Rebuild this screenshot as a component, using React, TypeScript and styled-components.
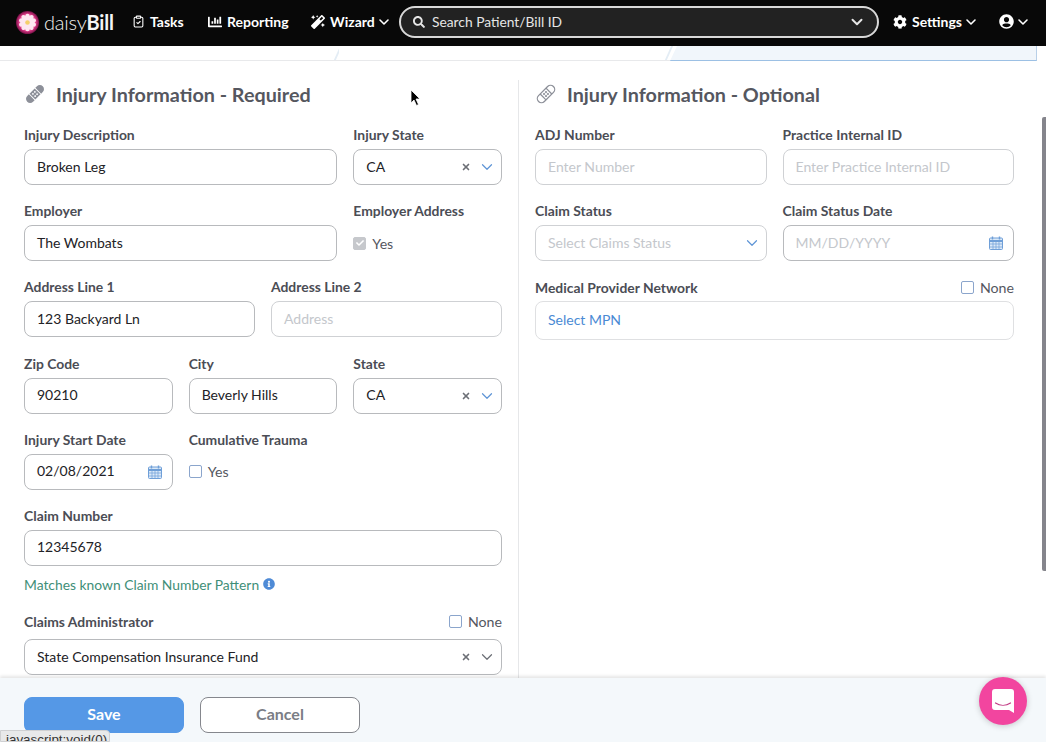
import styled, { createGlobalStyle } from "styled-components";
import {
  FaChartBar,
  FaCheck,
  FaCog,
  FaInfoCircle,
  FaMagic,
  FaSearch,
  FaUserCircle,
} from "react-icons/fa";
import { ChevronDown, ClipboardCheck, X } from "lucide-react";

const GlobalStyle = createGlobalStyle`
  html, body {
    margin: 0;
    height: 100%;
    overflow: hidden;
    background: #fff;
    font-family: Lato, "Liberation Sans", sans-serif;
  }
  * { box-sizing: border-box; }
`;

const Page = styled.div`
  position: relative;
  display: flex;
  flex-direction: column;
  height: 742px;
  overflow: hidden;
`;

const Header = styled.header`
  display: flex;
  align-items: center;
  flex: 0 0 46px;
  padding: 0 0 2px 16px;
  background: #080808;
  color: #fff;
`;

const Logo = styled.div`
  display: flex;
  align-items: center;
  gap: 5px;
  width: 116px;
  font-size: 20px;
  letter-spacing: -0.2px;
  color: #f2f2f2;
  font-weight: 300;
  b {
    font-weight: 700;
    color: #f4f4f4;
  }
`;

const NavItem = styled.div<{ $width: number }>`
  display: flex;
  align-items: center;
  gap: 5px;
  width: ${(p) => p.$width}px;
  padding-bottom: 1px;
  font-size: 14px;
  font-weight: 700;
  white-space: nowrap;
`;

const NavChevron = styled(ChevronDown).attrs({ size: 16, strokeWidth: 2.4 })`
  margin-left: -4px;
  flex: none;
`;

const SearchBar = styled.div`
  display: flex;
  align-items: center;
  gap: 7px;
  width: 480px;
  height: 32px;
  margin-right: 14px;
  padding: 0 12px 1px;
  background: #222;
  border: 2px solid #d8d8d8;
  border-radius: 16px;
  font-size: 13.8px;
  color: #e6e6e6;
  span {
    flex: 1;
  }
`;

const SearchChevron = styled(ChevronDown).attrs({ size: 18, strokeWidth: 2.6 })`
  margin-right: -1px;
`;

const TabStrip = styled.div`
  display: flex;
  flex: 0 0 15px;
`;

const Tab = styled.div<{ $width: number }>`
  position: relative;
  width: ${(p) => p.$width}px;
  background: #fff;
  border-bottom: 1px solid #e8e9eb;
  &::after {
    content: "";
    position: absolute;
    top: 0;
    bottom: 0;
    right: 0;
    width: 2px;
    background: #e4edf5;
    transform: skewX(-24deg);
  }
`;

const ActiveTab = styled.div`
  flex: 0 0 367px;
  background: #f1f6fb;
  border-bottom: 1px solid #9cc0e4;
  border-right: 1px solid #b9d0e8;
  clip-path: polygon(7px 0, 100% 0, 100% 100%, 0 100%);
`;

const Content = styled.main`
  display: flex;
  flex: 1;
  min-height: 0;
  padding-top: 19px;
  overflow: hidden;
`;

const LeftColumn = styled.section`
  width: 519px;
  padding: 1px 16px 0 24px;
  border-right: 1px solid #e6e7e9;
`;

const RightColumn = styled.section`
  flex: 1;
  padding: 1px 32px 0 16px;
`;

const Heading = styled.h2`
  display: flex;
  align-items: center;
  gap: 10px;
  height: 26px;
  margin: 0 0 19px;
  font-size: 19.75px;
  font-weight: 700;
  color: #55575f;
  svg {
    width: 22px;
    height: 22px;
    color: #8d9099;
  }
`;

const FormGrid = styled.div`
  display: grid;
  grid-template-columns: repeat(12, 1fr);
  column-gap: 16px;
  row-gap: 17.2px;
`;

const Field = styled.div<{ $span: number }>`
  grid-column: span ${(p) => p.$span};
  min-width: 0;
`;

const Label = styled.label`
  display: block;
  height: 18px;
  margin-bottom: 5px;
  font-size: 13.9px;
  line-height: 18px;
  font-weight: 700;
  color: #4b4d55;
`;

const LabelRow = styled.div<{ $gap: number }>`
  display: flex;
  justify-content: space-between;
  align-items: center;
  height: 18px;
  margin-bottom: ${(p) => p.$gap}px;
  font-size: 13.9px;
  font-weight: 700;
  color: #4b4d55;
`;

const TextBox = styled.div<{ $muted?: boolean; $light?: boolean }>`
  display: flex;
  align-items: center;
  gap: 7px;
  height: 36px;
  padding: 0 12px 2px;
  background: #fff;
  border: 1px solid ${(p) => (p.$light ? "#cfd1d4" : "#b8babd")};
  border-radius: 8px;
  font-size: 14px;
  color: ${(p) => (p.$muted ? "#c4c7cc" : "#222226")};
  span {
    flex: 1;
    white-space: nowrap;
  }
`;

const MpnBox = styled(TextBox)`
  height: 39px;
  border-color: #dfe0e2;
  color: #4a8ad4;
`;

const ClearIcon = styled(X).attrs({ size: 10, strokeWidth: 4 })`
  flex: none;
  margin-top: 2px;
  color: #6c6f76;
`;

const Chevron = styled(ChevronDown).attrs({ size: 18, strokeWidth: 1.6 })<{ $blue?: boolean }>`
  flex: none;
  margin: 2px -7px 0 0;
  color: ${(p) => (p.$blue ? "#5f95d6" : "#6c6f76")};
`;

const CalendarSlot = styled.div`
  display: flex;
  margin: 2px -2px 0 0;
`;

const CheckRow = styled.div`
  display: flex;
  align-items: center;
  gap: 6px;
  height: 36px;
  font-size: 14.2px;
  font-weight: 400;
  color: #55575f;
`;

const InlineCheck = styled(CheckRow)`
  height: 18px;
`;

const CheckBox = styled.div<{ $disabled?: boolean }>`
  display: flex;
  align-items: center;
  justify-content: center;
  width: 13px;
  height: 13px;
  background: ${(p) => (p.$disabled ? "#c6c8cc" : "#fff")};
  border: 1px solid ${(p) => (p.$disabled ? "#c6c8cc" : "#8ba5cc")};
  border-radius: 2px;
  color: #fff;
  svg {
    width: 8px;
    height: 8px;
  }
`;

const HintRow = styled.div`
  grid-column: span 12;
  display: flex;
  align-items: center;
  gap: 4px;
  height: 18px;
  margin-top: -8px;
  margin-bottom: 2px;
  font-size: 13.85px;
  color: #3f8f78;
  svg {
    width: 12px;
    height: 12px;
    color: #4f8bd6;
  }
`;

const Footer = styled.footer`
  display: flex;
  align-items: flex-start;
  gap: 16px;
  flex: 0 0 64px;
  padding: 19px 24px 0;
  background: #f4f8fb;
  box-shadow: 0 -2px 3px rgba(0, 0, 0, 0.1);
  z-index: 1;
`;

const Button = styled.button<{ $primary?: boolean }>`
  width: 160px;
  height: 36px;
  padding: 0 0 3px;
  border-radius: 8px;
  border: 1px solid ${(p) => (p.$primary ? "#5598e6" : "#85878d")};
  background: ${(p) => (p.$primary ? "#5598e6" : "#fff")};
  color: ${(p) => (p.$primary ? "#fff" : "#7a7d85")};
  font-family: inherit;
  font-size: 16px;
  font-weight: 700;
`;

const StatusTip = styled.div`
  position: absolute;
  left: 0;
  bottom: 0;
  z-index: 3;
  height: 12px;
  width: 110px;
  padding: 1px 0 0 5px;
  overflow: hidden;
  background: #e8e9ea;
  border: 1px solid #cfd0d2;
  border-radius: 0 4px 0 0;
  font-family: "Liberation Sans", sans-serif;
  font-size: 13.4px;
  line-height: 15px;
  white-space: nowrap;
  color: #333;
`;

const ChatBubble = styled.div`
  position: absolute;
  left: 979px;
  top: 677px;
  z-index: 3;
  display: flex;
  align-items: center;
  justify-content: center;
  width: 48px;
  height: 48px;
  border-radius: 50%;
  background: #f2459f;
  box-shadow: 0 1px 6px rgba(0, 0, 0, 0.2);
`;

const ScrollThumb = styled.div`
  position: absolute;
  right: 0;
  top: 117px;
  z-index: 2;
  width: 4px;
  height: 454px;
  background: #85858c;
  border-radius: 2px 0 0 2px;
`;

const Pointer = styled.svg`
  position: absolute;
  left: 410px;
  top: 89px;
  z-index: 4;
`;

const DaisyLogo = () => (
  <svg width="23" height="23" viewBox="0 0 24 24">
    <defs>
      <radialGradient id="daisyRing">
        <stop offset="70%" stopColor="#e8418f" />
        <stop offset="100%" stopColor="#7a1048" />
      </radialGradient>
    </defs>
    <circle cx="12" cy="12" r="12" fill="url(#daisyRing)" />
    {[0, 36, 72, 108, 144, 180, 216, 252, 288, 324].map((a) => (
      <ellipse key={a} cx="12" cy="6.8" rx="2.6" ry="4" fill="#fde6f0" transform={`rotate(${a} 12 12)`} />
    ))}
    <circle cx="12" cy="12" r="2.4" fill="#f4cf6a" />
  </svg>
);

const BandageFilled = () => (
  <svg viewBox="0 0 24 24" fill="currentColor">
    <g transform="rotate(-45 12 12)">
      <path d="M4.5 7.5H7v9H4.500a4.500 4.500 0 0 1 0-9zM17 7.500h2.500a4.500 4.500 0 0 1 0 9H17z" />
      <rect x="8" y="7.500" width="8" height="9" />
      <g fill="#fff">
        <circle cx="10.500" cy="10.300" r="1" />
        <circle cx="13.500" cy="10.300" r="1" />
        <circle cx="10.500" cy="13.700" r="1" />
        <circle cx="13.500" cy="13.700" r="1" />
      </g>
    </g>
  </svg>
);

const BandageOutline = () => (
  <svg viewBox="0 0 24 24" fill="none" stroke="currentColor" strokeWidth="1.4">
    <g transform="rotate(-45 12 12)">
      <rect x="0.5" y="7.500" width="23" height="9" rx="4.500" />
      <path d="M7.500 7.500v9M16.500 7.500v9" />
      <circle cx="10.500" cy="10.500" r=".5" />
      <circle cx="13.500" cy="10.500" r=".5" />
      <circle cx="10.500" cy="13.500" r=".5" />
      <circle cx="13.500" cy="13.500" r=".5" />
    </g>
  </svg>
);

const CalendarIcon = () => (
  <CalendarSlot>
    <svg width="14" height="14" viewBox="0 0 14 14" fill="none">
      <rect x=".5" y="2" width="13" height="11.500" rx="1" fill="#dbe9f8" stroke="#6f9fd8" />
      <path d="M.5 5h13" stroke="#6f9fd8" strokeWidth="2" />
      <path d="M4 6v7M7 6v7M10 6v7M1 8h12M1 11h12" stroke="#6f9fd8" strokeWidth=".7" />
      <path d="M3.500 .5v3M10.500 .5v3" stroke="#6f9fd8" strokeWidth="1.4" />
    </svg>
  </CalendarSlot>
);

type SelectBoxProps = { value: string; blue?: boolean; clear?: boolean; muted?: boolean; light?: boolean };

const SelectBox = ({ value, blue, clear = true, muted, light }: SelectBoxProps) => (
  <TextBox $muted={muted} $light={light}>
    <span>{value}</span>
    {clear && <ClearIcon />}
    <Chevron $blue={blue} />
  </TextBox>
);

const NoneCheck = () => (
  <InlineCheck>
    <CheckBox />
    None
  </InlineCheck>
);

export default function App() {
  return (
    <Page>
      <GlobalStyle />
      <Header>
        <Logo>
          <DaisyLogo />
          <div>
            daisy<b>Bill</b>
          </div>
        </Logo>
        <NavItem $width={76}>
          <ClipboardCheck size={13} strokeWidth={2} />
          Tasks
        </NavItem>
        <NavItem $width={103}>
          <FaChartBar size={14} />
          Reporting
        </NavItem>
        <NavItem $width={88}>
          <FaMagic size={14} />
          Wizard
          <NavChevron />
        </NavItem>
        <SearchBar>
          <FaSearch size={12} />
          <span>Search Patient/Bill ID</span>
          <SearchChevron />
        </SearchBar>
        <NavItem $width={106}>
          <FaCog size={14} />
          Settings
          <NavChevron />
        </NavItem>
        <NavItem $width={40}>
          <FaUserCircle size={15} />
          <NavChevron />
        </NavItem>
      </Header>
      <TabStrip>
        <Tab $width={339} />
        <Tab $width={331} />
        <ActiveTab />
      </TabStrip>
      <Content>
        <LeftColumn>
          <Heading>
            <BandageFilled />
            Injury Information - Required
          </Heading>
          <FormGrid>
            <Field $span={8}>
              <Label>Injury Description</Label>
              <TextBox>Broken Leg</TextBox>
            </Field>
            <Field $span={4}>
              <Label>Injury State</Label>
              <SelectBox value="CA" blue />
            </Field>
            <Field $span={8}>
              <Label>Employer</Label>
              <TextBox>The Wombats</TextBox>
            </Field>
            <Field $span={4}>
              <Label>Employer Address</Label>
              <CheckRow>
                <CheckBox $disabled>
                  <FaCheck />
                </CheckBox>
                Yes
              </CheckRow>
            </Field>
            <Field $span={6}>
              <Label>Address Line 1</Label>
              <TextBox>123 Backyard Ln</TextBox>
            </Field>
            <Field $span={6}>
              <Label>Address Line 2</Label>
              <TextBox $muted $light>Address</TextBox>
            </Field>
            <Field $span={4}>
              <Label>Zip Code</Label>
              <TextBox>90210</TextBox>
            </Field>
            <Field $span={4}>
              <Label>City</Label>
              <TextBox>Beverly Hills</TextBox>
            </Field>
            <Field $span={4}>
              <Label>State</Label>
              <SelectBox value="CA" blue />
            </Field>
            <Field $span={4}>
              <Label>Injury Start Date</Label>
              <TextBox>
                <span>02/08/2021</span>
                <CalendarIcon />
              </TextBox>
            </Field>
            <Field $span={8}>
              <Label>Cumulative Trauma</Label>
              <CheckRow>
                <CheckBox />
                Yes
              </CheckRow>
            </Field>
            <Field $span={12}>
              <Label>Claim Number</Label>
              <TextBox>12345678</TextBox>
            </Field>
            <HintRow>
              Matches known Claim Number Pattern
              <FaInfoCircle />
            </HintRow>
            <Field $span={12}>
              <LabelRow $gap={9}>
                Claims Administrator
                <NoneCheck />
              </LabelRow>
              <SelectBox value="State Compensation Insurance Fund" />
            </Field>
          </FormGrid>
        </LeftColumn>
        <RightColumn>
          <Heading>
            <BandageOutline />
            Injury Information - Optional
          </Heading>
          <FormGrid>
            <Field $span={6}>
              <Label>ADJ Number</Label>
              <TextBox $muted $light>Enter Number</TextBox>
            </Field>
            <Field $span={6}>
              <Label>Practice Internal ID</Label>
              <TextBox $muted $light>Enter Practice Internal ID</TextBox>
            </Field>
            <Field $span={6}>
              <Label>Claim Status</Label>
              <SelectBox value="Select Claims Status" clear={false} blue muted light />
            </Field>
            <Field $span={6}>
              <Label>Claim Status Date</Label>
              <TextBox $muted>
                <span>MM/DD/YYYY</span>
                <CalendarIcon />
              </TextBox>
            </Field>
            <Field $span={12}>
              <LabelRow $gap={5}>
                Medical Provider Network
                <NoneCheck />
              </LabelRow>
              <MpnBox>Select MPN</MpnBox>
            </Field>
          </FormGrid>
        </RightColumn>
      </Content>
      <Footer>
        <Button $primary>Save</Button>
        <Button>Cancel</Button>
      </Footer>
      <ScrollThumb />
      <ChatBubble>
        <svg width="22" height="24" viewBox="0 0 22 24">
          <path d="M3 0h16a3 3 0 0 1 3 3v21l-5-3H3a3 3 0 0 1-3-3V3a3 3 0 0 1 3-3z" fill="#fff" />
          <path d="M3.500 14c4.500 3 10.500 3 15 0" fill="none" stroke="#c23a84" strokeWidth="1.2" strokeLinecap="round" />
        </svg>
      </ChatBubble>
      <StatusTip>javascript:void(0)</StatusTip>
      <Pointer width="12" height="18" viewBox="0 0 12 18">
        <path d="M1 1v13l3-3 2.500 5.500 2-1L6 10h4z" fill="#000" stroke="#fff" strokeWidth=".8" />
      </Pointer>
    </Page>
  );
}
